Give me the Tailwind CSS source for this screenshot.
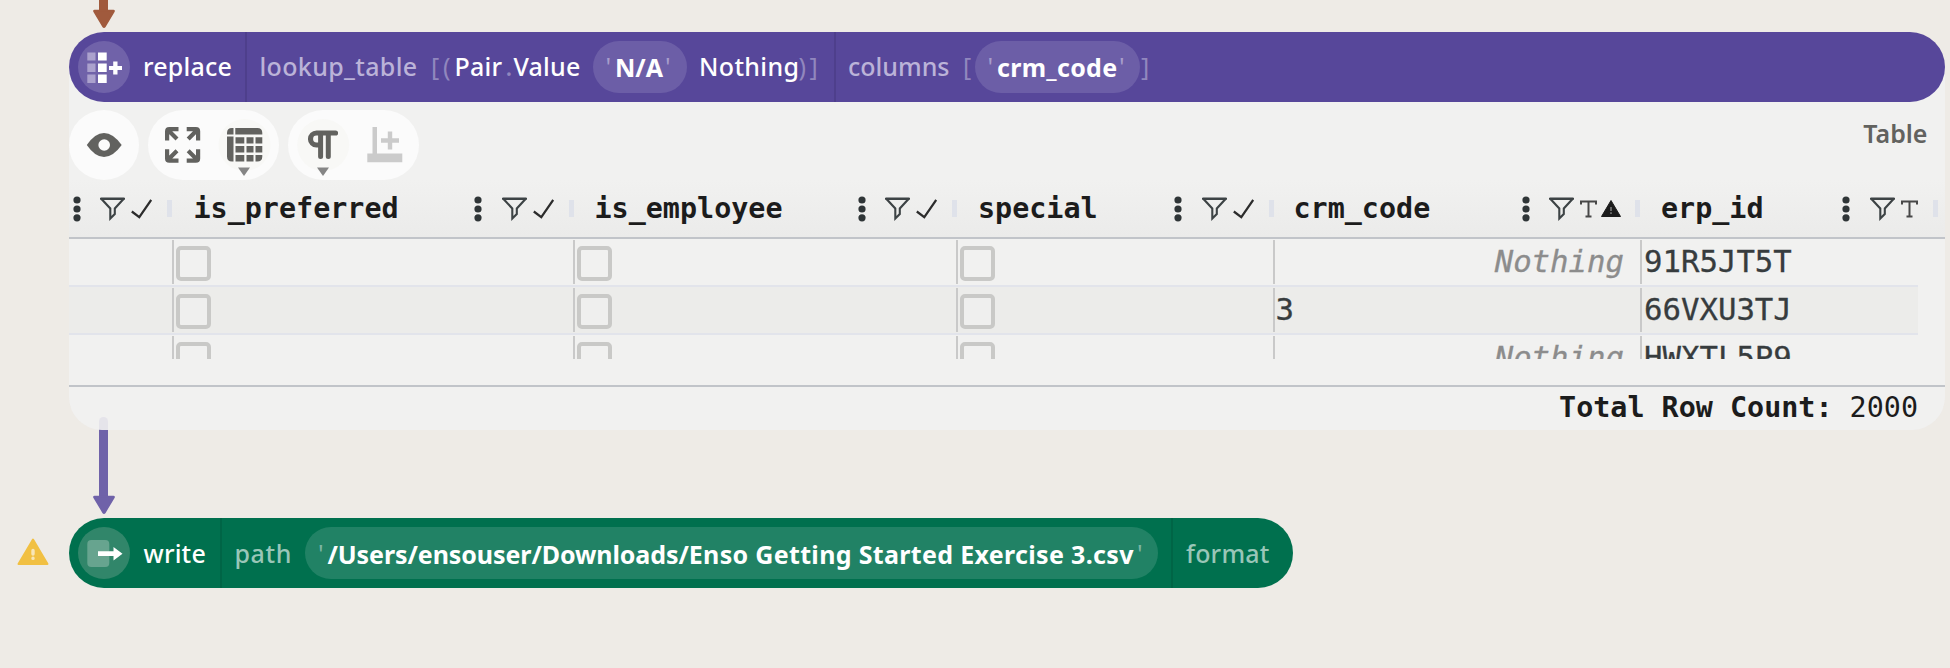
<!DOCTYPE html>
<html lang="en">
<head>
<meta charset="utf-8">
<title>Workflow graph</title>
<script src="https://cdn.jsdelivr.net/npm/@tailwindcss/browser@4"></script>
</head>
<body class="relative h-[668px] w-[1950px] overflow-hidden bg-[#eeebe6] font-['Noto_Sans',sans-serif] text-[25px] leading-[34px] whitespace-nowrap">

<svg class="hidden">
  <symbol id="dots" viewBox="0 0 8 26"><g fill="#2f3537"><circle cx="4" cy="4" r="3.6"/><circle cx="4" cy="13" r="3.6"/><circle cx="4" cy="21.800" r="3.6"/></g></symbol>
  <symbol id="funnel" viewBox="0 0 25 24"><path d="M1.500 2H23.500L14.800 11.500V17L10.300 21.500V11.500Z" fill="none" stroke="#3d4345" stroke-width="2.100"/><path d="M0.500 1.800H24.500" stroke="#3d4345" stroke-width="2.400"/></symbol>
  <symbol id="check" viewBox="0 0 21 20"><path d="M.8 12.500L8.300 18.200L20.200 1" fill="none" stroke="#2c2c2c" stroke-width="2.200"/></symbol>
  <symbol id="text" viewBox="0 0 17 18"><path d="M1 4.500V1.500H16V4.500M8.500 1.500V16.500M5.500 16.500H11.500" fill="none" stroke="#484848" stroke-width="2"/></symbol>
  <symbol id="alert" viewBox="0 0 20 17"><path d="M10 .5L19.500 16.500H.5Z" fill="#1c1c1c" stroke="#1c1c1c" stroke-linejoin="round"/><path d="M10 7V11M10 12.300V14" stroke="#888" stroke-width="1.400"/></symbol>
  <symbol id="head" viewBox="0 0 24 20"><path d="M2.500 1.500H21.500Q22.500 1.500 21.900 2.500L12.800 17.800Q12 18.800 11.200 17.800L2.100 2.500Q1.500 1.500 2.500 1.500Z" fill="currentColor" stroke="currentColor" stroke-width="1.500" stroke-linejoin="round"/></symbol>
</svg>

<!-- incoming edge -->
<div class="absolute left-[91.500px] top-0 flex w-6 flex-col items-center text-[#a05a3d]">
  <div class="h-[10px] w-[9px] bg-current"></div>
  <svg class="-mt-[1.500px] h-5 w-6"><use href="#head"/></svg>
</div>

<!-- outgoing edge -->
<div class="absolute left-[91.500px] top-[417px] flex w-6 flex-col items-center text-[#6f62a9]">
  <div class="h-[80px] w-[9px] rounded-t-full bg-current"></div>
  <svg class="-mt-[2.500px] h-5 w-6"><use href="#head"/></svg>
</div>

<!-- table visualization -->
<section class="absolute left-[68.500px] top-[66px] flex h-[364px] w-[1876px] flex-col overflow-hidden rounded-b-[33px] bg-[#f1f1f1]/91 pt-[44px]">
  <div class="flex h-[70px] shrink-0 items-start">
    <div class="h-[70px] w-[70px] rounded-full bg-[#fbfbfb]">
      <svg class="size-[70px]" viewBox="0 0 70 70"><path d="M17.800 35Q26 23 35 23T52.700 35Q44 47 35 47T17.800 35Z" fill="#62625f"/><circle cx="35.200" cy="35" r="5.800" fill="#fbfbfb"/></svg>
    </div>
    <div class="ml-[9px] h-[70px] w-[131px] rounded-full bg-[#fbfbfb]">
      <svg class="h-[70px] w-[131px]" viewBox="0 0 131 70">
        <circle cx="96.500" cy="35" r="26" fill="#f8f8f6"/>
        <g fill="none" stroke="#62625f" stroke-width="4.200">
          <path d="M19.100 30.500V21.300Q19.100 19.100 21.300 19.100H30.500M20 20L29 29"/>
          <path d="M50.100 30.500V21.300Q50.100 19.100 47.900 19.100H38.700M40.200 29L49.200 20"/>
          <path d="M19.100 39.300V48.500Q19.100 50.700 21.300 50.700H30.500M20 49.800L29 40.800"/>
          <path d="M50.100 39.300V48.500Q50.100 50.700 47.900 50.700H38.700M40.200 40.800L49.200 49.800"/>
        </g>
        <g fill="#62625f">
          <path d="M79 24.500V23Q79 18 84 18H85.500V24.500ZM87.300 18H109.300Q114.300 18 114.300 23V24.500H87.300ZM79 26.500H85.500V51.500H84Q79 51.500 79 46.500Z"/>
          <path d="M87.500 27.300H96.300V33.500H87.500ZM98.500 27.300H105.500V33.500H98.500ZM107.500 27.300H114.300V33.500H107.500ZM87.500 36H96.300V42.500H87.500ZM98.500 36H105.500V42.500H98.500ZM107.500 36H114.300V42.500H107.500ZM87.500 45H96.300V51.500H87.500ZM98.500 45H105.500V51.500H98.500ZM107.500 45H114.300V46.500Q114.300 51.500 109.300 51.500H107.500Z"/>
        </g>
        <path d="M90 57.500H102L96 66Z" fill="#858585"/>
      </svg>
    </div>
    <div class="ml-[9px] h-[70px] w-[131px] rounded-full bg-[#fbfbfb]">
      <svg class="h-[70px] w-[131px]" viewBox="0 0 131 70">
        <circle cx="35.200" cy="35" r="26" fill="#f8f8f6"/>
        <path d="M47.500 23H28.500A5.800 5.800 0 0 0 28.500 35H32" fill="none" stroke="#62625f" stroke-width="5.200" stroke-linecap="round"/>
        <path d="M32.600 24V46.500M40.300 24V46.500" stroke="#62625f" stroke-width="5" stroke-linecap="round"/>
        <path d="M29 57.500H41L35 66Z" fill="#858585"/>
        <path d="M84.500 17H89V43.500H84.500ZM79.300 43.500H114.300V52.300H79.300ZM99.800 21.500H104.200V28.300H111V32.700H104.200V39.500H99.800V32.700H93V28.300H99.800Z" fill="#cbcbcb"/>
      </svg>
    </div>
    <span class="mr-[17px] ml-auto mt-[6px] text-[25px] leading-[34px] font-semibold text-[#62625f]">Table</span>
  </div>

  <div class="flex h-[59px] shrink-0 items-center border-b-2 border-[#c1c4c9] bg-linear-to-b from-transparent to-[#ebebea] font-['DejaVu_Sans_Mono',monospace] text-[28.400px] font-bold text-[#1c1c1c]">
    <div class="flex w-[104.500px] items-center justify-end pr-px"><svg class="mr-[19.500px] h-[26px] w-2"><use href="#dots"/></svg><svg class="mr-[6px] h-6 w-[25px]"><use href="#funnel"/></svg><svg class="mr-[15px] h-5 w-[21px]"><use href="#check"/></svg><i class="h-[17px] w-[5px] bg-[#dfe2ea]"></i></div>
    <div class="flex w-[401.500px] items-center pr-px pl-[20.500px]"><span class="mr-auto">is_preferred</span><svg class="mr-[19.500px] h-[26px] w-2"><use href="#dots"/></svg><svg class="mr-[6px] h-6 w-[25px]"><use href="#funnel"/></svg><svg class="mr-[15px] h-5 w-[21px]"><use href="#check"/></svg><i class="h-[17px] w-[5px] bg-[#dfe2ea]"></i></div>
    <div class="flex w-[383.500px] items-center pr-px pl-[20px]"><span class="mr-auto">is_employee</span><svg class="mr-[19.500px] h-[26px] w-2"><use href="#dots"/></svg><svg class="mr-[6px] h-6 w-[25px]"><use href="#funnel"/></svg><svg class="mr-[15px] h-5 w-[21px]"><use href="#check"/></svg><i class="h-[17px] w-[5px] bg-[#dfe2ea]"></i></div>
    <div class="flex w-[316.500px] items-center pr-px pl-[20px]"><span class="mr-auto">special</span><svg class="mr-[19.500px] h-[26px] w-2"><use href="#dots"/></svg><svg class="mr-[6px] h-6 w-[25px]"><use href="#funnel"/></svg><svg class="mr-[15px] h-5 w-[21px]"><use href="#check"/></svg><i class="h-[17px] w-[5px] bg-[#dfe2ea]"></i></div>
    <div class="flex w-[366.500px] items-center pr-px pl-[19px]"><span class="mr-auto">crm_code</span><svg class="mr-[19.500px] h-[26px] w-2"><use href="#dots"/></svg><svg class="mr-[6px] h-6 w-[25px]"><use href="#funnel"/></svg><svg class="mr-[4px] h-[18px] w-[17px]"><use href="#text"/></svg><svg class="mr-[14px] h-[17px] w-5"><use href="#alert"/></svg><i class="h-[17px] w-[5px] bg-[#dfe2ea]"></i></div>
    <div class="flex w-[298px] items-center pr-px pl-[20px]"><span class="mr-auto">erp_id</span><svg class="mr-[19.500px] h-[26px] w-2"><use href="#dots"/></svg><svg class="mr-[6px] h-6 w-[25px]"><use href="#funnel"/></svg><svg class="mr-[15.500px] h-[18px] w-[17px]"><use href="#text"/></svg><i class="h-[17px] w-[5px] bg-[#dfe2ea]"></i></div>
  </div>

  <div class="h-[120px] w-[1849.500px] shrink-0 overflow-hidden font-['DejaVu_Sans_Mono',monospace] text-[30.700px] text-[#373c3e] [-webkit-text-stroke:0.3px]">
    <div class="flex h-12 border-b-2 border-[#e2e4eb] py-px">
      <div class="w-[103.500px]"></div>
      <div class="w-[401px] border-l-2 border-[#c9c9c9] pt-[6px] pl-[2px]"><div class="size-[35px] rounded-[5px] border-4 border-[#c9c9c7]"></div></div>
      <div class="w-[383px] border-l-2 border-[#c9c9c9] pt-[6px] pl-[2px]"><div class="size-[35px] rounded-[5px] border-4 border-[#c9c9c7]"></div></div>
      <div class="w-[316.500px] border-l-2 border-[#c9c9c9] pt-[6px] pl-[2px]"><div class="size-[35px] rounded-[5px] border-4 border-[#c9c9c7]"></div></div>
      <div class="flex w-[367.500px] items-center justify-end border-l-2 border-[#c9c9c9] pr-[16px] text-[#8c8c8c] italic">Nothing</div>
      <div class="flex grow items-center border-l-2 border-[#c9c9c9] pl-[2px]">91R5JT5T</div>
    </div>
    <div class="flex h-12 border-b-2 border-[#e2e4eb] bg-[#ececea] py-px">
      <div class="w-[103.500px]"></div>
      <div class="w-[401px] border-l-2 border-[#c9c9c9] pt-[6px] pl-[2px]"><div class="size-[35px] rounded-[5px] border-4 border-[#c9c9c7] bg-[#efefee]"></div></div>
      <div class="w-[383px] border-l-2 border-[#c9c9c9] pt-[6px] pl-[2px]"><div class="size-[35px] rounded-[5px] border-4 border-[#c9c9c7] bg-[#efefee]"></div></div>
      <div class="w-[316.500px] border-l-2 border-[#c9c9c9] pt-[6px] pl-[2px]"><div class="size-[35px] rounded-[5px] border-4 border-[#c9c9c7] bg-[#efefee]"></div></div>
      <div class="flex w-[367.500px] items-center border-l-2 border-[#c9c9c9] pl-px">3</div>
      <div class="flex grow items-center border-l-2 border-[#c9c9c9] pl-[2px]">66VXU3TJ</div>
    </div>
    <div class="flex h-12 border-b-2 border-[#e2e4eb] py-px">
      <div class="w-[103.500px]"></div>
      <div class="w-[401px] border-l-2 border-[#c9c9c9] pt-[6px] pl-[2px]"><div class="size-[35px] rounded-[5px] border-4 border-[#c9c9c7]"></div></div>
      <div class="w-[383px] border-l-2 border-[#c9c9c9] pt-[6px] pl-[2px]"><div class="size-[35px] rounded-[5px] border-4 border-[#c9c9c7]"></div></div>
      <div class="w-[316.500px] border-l-2 border-[#c9c9c9] pt-[6px] pl-[2px]"><div class="size-[35px] rounded-[5px] border-4 border-[#c9c9c7]"></div></div>
      <div class="flex w-[367.500px] items-center justify-end border-l-2 border-[#c9c9c9] pr-[16px] text-[#8c8c8c] italic">Nothing</div>
      <div class="flex grow items-center border-l-2 border-[#c9c9c9] pl-[2px]">HWXTL5P9</div>
    </div>
  </div>

  <div class="mt-[26px] flex grow items-center justify-end border-t-2 border-[#c1c4c9] pr-[26.500px] pb-[2px] font-['DejaVu_Sans_Mono',monospace] text-[28.400px] text-[#1c1c1c]"><span class="whitespace-pre"><b>Total Row Count:</b> 2000</span></div>
</section>

<!-- replace node -->
<section class="absolute left-[68.500px] top-[31.500px] flex h-[70px] w-[1876px] items-center rounded-full bg-[#57479a] pl-[9px] font-medium text-white">
  <div class="size-[52px] shrink-0 rounded-full bg-[#7062a9]">
    <svg class="size-[52px]" viewBox="0 0 52 52">
      <path d="M9.300 11.500H17.500V19.500H9.300ZM9.300 22.500H17.500V31H9.300ZM9.300 33.500H17.500V42H9.300Z" fill="#aba1cd"/>
      <path d="M20 11.500H28.700V19.500H20ZM20 22.500H28.700V31H20ZM20 33.500H28.700V42H20ZM35.200 20.500H39.500V25H44V29H39.500V33.500H35.200V29H31V25H35.200Z" fill="#fff"/>
    </svg>
  </div>
  <span class="ml-[13.500px] w-[101.500px] pb-[2px] tracking-[0.2px]">replace</span>
  <i class="h-full w-[2px] bg-[#4e3f8c]"></i>
  <span class="ml-[13px] w-[171.500px] pb-[2px] tracking-[0.35px] text-[#bbb3d8]">lookup_table</span>
  <span class="w-[12px] pb-[2px] font-normal text-[#9187be]">[</span>
  <span class="w-[11.500px] pb-[2px] font-normal text-[#9187be]">(</span>
  <span class="w-[51px] pb-[2px] tracking-[0.2px]">Pair</span>
  <span class="w-[8px] pb-[2px] text-[#9187be]">.</span>
  <span class="w-[79.500px] pb-[2px] tracking-[0.2px]">Value</span>
  <div class="flex h-[52px] w-[94px] items-center rounded-full bg-[#6c5ea7] pl-[12.500px]">
    <span class="w-[9.500px] pb-[2px] font-normal text-[#a79dcb]">'</span><span class="w-[50px] font-bold">N/A</span><span class="pb-[2px] font-normal text-[#a79dcb]">'</span>
  </div>
  <span class="ml-[12px] w-[99.500px] pb-[2px] tracking-[0.35px]">Nothing</span>
  <span class="w-[11px] pb-[2px] font-normal text-[#9187be]">)</span>
  <span class="w-[24px] pb-[2px] font-normal text-[#9187be]">]</span>
  <i class="h-full w-[2px] bg-[#4e3f8c]"></i>
  <span class="ml-[12.500px] w-[115px] pb-[2px] text-[#bbb3d8]">columns</span>
  <span class="w-[12px] pb-[2px] font-normal text-[#9187be]">[</span>
  <div class="flex h-[52px] w-[164.500px] items-center rounded-full bg-[#6c5ea7] pl-[12.500px]">
    <span class="w-[9.500px] pb-[2px] font-normal text-[#a79dcb]">'</span><span class="w-[122px] font-bold tracking-[0.3px]">crm_code</span><span class="pb-[2px] font-normal text-[#a79dcb]">'</span>
  </div>
  <span class="ml-[1.500px] pb-[2px] font-normal text-[#9187be]">]</span>
</section>

<!-- warning -->
<svg class="absolute left-[17px] top-[537px] h-7 w-8" viewBox="0 0 32 28"><path d="M16 2.500L30.500 27H1.500Z" fill="#f1c043" stroke="#f1c043" stroke-width="2" stroke-linejoin="round"/><path d="M16 13.500V17M16 21.300V21.400" stroke="#f8e6b8" stroke-width="3.400" stroke-linecap="round"/></svg>

<!-- write node -->
<section class="absolute left-[68.500px] top-[517.500px] flex h-[70px] w-[1224.500px] items-center rounded-full bg-[#00704e] pl-[9px] font-medium text-white">
  <div class="size-[52px] shrink-0 rounded-full bg-[#31866a]">
    <svg class="size-[52px]" viewBox="0 0 52 52"><rect x="9.300" y="13" width="22" height="27" rx="4" fill="#67a48f"/><path d="M20 24.300H35.500V20L44.500 26.700L35.500 33.500V29H20Z" fill="#fff"/></svg>
  </div>
  <span class="ml-[14px] w-[76px] tracking-[0.2px]">write</span>
  <i class="h-full w-[2px] bg-[#006546]"></i>
  <span class="ml-[13px] w-[70.500px] tracking-[0.6px] text-[#99c6b8]">path</span>
  <div class="flex h-[52px] w-[853px] items-center rounded-full bg-[#218265] pl-[13px]">
    <span class="w-[9.500px] font-normal text-[#7db5a4]">'</span><span class="w-[809.500px] pt-[2px] font-bold tracking-[0.33px]"><span class="tracking-[-0.08px]">/Users/ensouser/Downloads/</span>Enso Getting Started Exercise 3.csv</span><span class="font-normal text-[#7db5a4]">'</span>
  </div>
  <i class="ml-[13px] h-full w-[2px] bg-[#006546]"></i>
  <span class="ml-[13px] tracking-[0.2px] text-[#99c6b8]">format</span>
</section>
</body>
</html>
